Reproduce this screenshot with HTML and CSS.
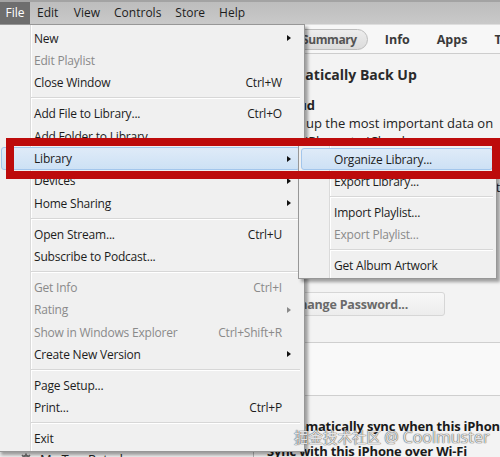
FILE: index.html
```html
<!DOCTYPE html>
<html lang="en">
<head>
<meta charset="utf-8">
<title>iTunes – File menu</title>
<link rel="stylesheet" href="styles.css">
</head>
<body>
<div class="screen">
  <nav class="menubar">
    <span class="mb-item is-open">File</span>
    <span class="mb-item">Edit</span>
    <span class="mb-item">View</span>
    <span class="mb-item">Controls</span>
    <span class="mb-item">Store</span>
    <span class="mb-item">Help</span>
  </nav>

  <div class="app">
    <aside class="sidebar">
      <ul class="source-list">
        <li class="src-head">LIBRARY</li>
        <li>Music</li>
        <li>Movies</li>
        <li>TV Shows</li>
        <li>Podcasts</li>
        <li>iTunes U</li>
        <li>Books</li>
        <li>Apps</li>
        <li>Tones</li>
        <li>Radio</li>
        <li class="src-head">STORE</li>
        <li>iTunes Store</li>
        <li>Purchased</li>
        <li class="src-head">DEVICES</li>
        <li>iPhone</li>
        <li class="src-head">GENIUS</li>
        <li>Genius</li>
        <li class="src-head">PLAYLISTS</li>
        <li>iTunes DJ</li>
        <li>90's Music</li>
        <li>Classical Music</li>
        <li class="src-playlist">
          <svg class="pl-icon" viewBox="0 0 12 12" width="12" height="12"><circle cx="6" cy="6" r="3.2" fill="none" stroke="#6b6b6b" stroke-width="2"/><path d="M6 0.5v2M6 9.5v2M0.5 6h2M9.5 6h2M2 2l1.4 1.4M8.6 8.6L10 10M2 10l1.4-1.4M8.6 3.4L10 2" stroke="#6b6b6b" stroke-width="1.6"/></svg>
          My Top Rated
        </li>
      </ul>
    </aside>

    <main class="content">
      <div class="tabs">
        <span class="tab is-active">Summary</span>
        <span class="tab">Info</span>
        <span class="tab">Apps</span>
        <span class="tab">Tones</span>
      </div>

      <section class="pane">
        <h2 class="pane-title">Automatically Back Up</h2>
        <h3 class="opt-title">iCloud</h3>
        <p class="opt-text">Back up the most important data on<br>your iPhone to iCloud.</p>
        <h3 class="opt-title">This computer</h3>
        <p class="opt-text">A full backup of your iPhone will be stored<br>on this computer.</p>
        <p class="check-line">Encrypt local backup</p>
        <p class="note">This will allow account passwords to be<br>backed up. However, keep it safe.</p>
        <button class="btn" type="button">Change Password...</button>
      </section>

      <section class="pane pane-alt">
        <p class="opt-text">Manually Back Up and Restore</p>
      </section>

      <section class="pane pane-options">
        <p class="opt-strong opt-first">Automatically sync when this iPhone is connected</p>
        <p class="opt-strong">Sync with this iPhone over Wi-Fi</p>
      </section>
    </main>
  </div>

  <div class="menu file-menu">
    <div class="mi"><span class="label">New</span><span class="arrow"></span></div>
    <div class="mi is-disabled"><span class="label">Edit Playlist</span></div>
    <div class="mi"><span class="label">Close Window</span><span class="key">Ctrl+W</span></div>
    <div class="sep"></div>
    <div class="mi"><span class="label">Add File to Library...</span><span class="key">Ctrl+O</span></div>
    <div class="mi"><span class="label">Add Folder to Library...</span></div>
    <div class="mi is-hot"><span class="label">Library</span><span class="arrow"></span></div>
    <div class="mi"><span class="label">Devices</span><span class="arrow"></span></div>
    <div class="mi"><span class="label">Home Sharing</span><span class="arrow"></span></div>
    <div class="sep"></div>
    <div class="mi"><span class="label">Open Stream...</span><span class="key">Ctrl+U</span></div>
    <div class="mi"><span class="label">Subscribe to Podcast...</span></div>
    <div class="sep"></div>
    <div class="mi is-disabled"><span class="label">Get Info</span><span class="key">Ctrl+I</span></div>
    <div class="mi is-disabled"><span class="label">Rating</span><span class="arrow"></span></div>
    <div class="mi is-disabled"><span class="label">Show in Windows Explorer</span><span class="key">Ctrl+Shift+R</span></div>
    <div class="mi"><span class="label">Create New Version</span><span class="arrow"></span></div>
    <div class="sep"></div>
    <div class="mi"><span class="label">Page Setup...</span></div>
    <div class="mi"><span class="label">Print...</span><span class="key">Ctrl+P</span></div>
    <div class="sep"></div>
    <div class="mi"><span class="label">Exit</span></div>
  </div>

  <div class="menu sub-menu">
    <div class="mi is-hot"><span class="label">Organize Library...</span></div>
    <div class="mi"><span class="label">Export Library...</span></div>
    <div class="sep"></div>
    <div class="mi"><span class="label">Import Playlist...</span></div>
    <div class="mi is-disabled"><span class="label">Export Playlist...</span></div>
    <div class="sep"></div>
    <div class="mi"><span class="label">Get Album Artwork</span></div>
  </div>

  <div class="callout"></div>
  <div class="watermark"><span class="wm-cjk">掘金技术社区</span> <span class="wm-latin">@ Coolmuster</span></div>
</div>
</body>
</html>
```

FILE: styles.css
```css
* { box-sizing: border-box; margin: 0; padding: 0; }

html, body { width: 500px; height: 457px; overflow: hidden; }

body {
  font-family: "Open Sans", "Noto Sans", sans-serif;
  font-size: 12px;
  color: #1c1c1c;
  background: #f0f0f0;
}

ul { list-style: none; }

.screen {
  position: relative;
  width: 500px;
  height: 457px;
  overflow: hidden;
  display: flex;
  flex-direction: column;
}

/* ---------- menu bar ---------- */
.menubar {
  flex: none;
  height: 24px;
  display: flex;
  background: linear-gradient(#bdbdbd, #c9c9c9);
  border-top: 2px solid #a3a3a3;
}

.mb-item {
  padding: 0 7px;
  line-height: 21px;
  color: #1c1c1c;
}

.mb-item.is-open {
  width: 30px;
  padding: 0;
  text-align: center;
  background: #6e6e6e;
  color: #fff;
}

.mb-item.is-open + .mb-item { padding-right: 8.5px; }

/* ---------- app body ---------- */
.app {
  flex: 1;
  display: flex;
  min-height: 0;
}

.sidebar {
  flex: none;
  width: 254px;
  background: #eeeeee;
  border-right: 1px solid #b3b3b3;
  padding-top: 5px;
}

.source-list li {
  height: 20px;
  line-height: 20px;
  padding-left: 40px;
  font-size: 13px;
  color: #222;
  display: flex;
  align-items: center;
  gap: 8px;
}

.source-list .src-head {
  padding-left: 10px;
  font-size: 11px;
  font-weight: 700;
  color: #666;
}

.source-list .src-playlist { padding-left: 20px; }

.content {
  flex: 1;
  min-width: 0;
  background: #f3f3f3;
  overflow: hidden;
}

.tabs {
  height: 30px;
  display: flex;
  align-items: center;
  padding-left: 36px;
  background: #f7f7f7;
  border-top: 1px solid #dedede;
  border-bottom: 1px solid #cdcdcd;
  font-weight: 700;
  font-size: 12.5px;
  color: #3a3a3a;
  white-space: nowrap;
}

.tab + .tab { margin-left: 27px; }
.tab.is-active + .tab { margin-left: 17px; }

.tab.is-active {
  padding: 1px 10px 1px 11px;
  border: 1px solid #bdbdbd;
  border-radius: 11px;
  background: linear-gradient(#ededed, #dcdcdc);
  color: #555;
  letter-spacing: -0.4px;
  font-size: 12px;
}

.pane {
  padding: 10px 0 0 20px;
  white-space: nowrap;
}

.pane-title {
  margin-left: -16px;
  font-size: 14px;
  font-weight: 700;
  line-height: 22px;
  color: #2a2a2a;
}

.opt-title {
  margin-top: 10px;
  font-size: 13px;
  font-weight: 700;
  line-height: 18px;
  color: #222;
}

.opt-text {
  font-size: 13px;
  line-height: 18px;
  color: #222;
}

.check-line {
  margin-top: 8px;
  font-size: 13px;
  line-height: 18px;
}

.note {
  margin-top: 7px;
  font-size: 12px;
  line-height: 16px;
  color: #333;
}

.btn {
  display: block;
  margin: 13px 0 0 16px;
  height: 24px;
  width: 155px;
  font: 700 12.5px "Open Sans", "Noto Sans", sans-serif;
  letter-spacing: -0.2px;
  color: #6a6a6a;
  background: linear-gradient(#f7f7f7, #ececec);
  border: 1px solid #d6d6d6;
  border-radius: 3px;
  text-align: right;
  padding-right: 36px;
}

.pane-alt {
  margin-top: 26px;
  height: 54px;
  background: #f9f9f9;
  border-top: 1px solid #cfcfcf;
  border-bottom: 1px solid #cfcfcf;
}

.pane-alt .opt-text { visibility: hidden; }

.pane-options { padding: 18px 0 0 13px; }

.opt-strong {
  font-size: 13px;
  font-weight: 700;
  line-height: 25px;
  letter-spacing: -0.2px;
  color: #1a1a1a;
}

.opt-strong.opt-first { padding-left: 8px; }

/* ---------- drop-down menus ---------- */
.menu {
  --gutter: 31px;
  position: absolute;
  background:
    linear-gradient(to right,
      transparent var(--gutter),
      #dadada var(--gutter), #dadada calc(var(--gutter) + 1px),
      #ffffff calc(var(--gutter) + 1px), #ffffff calc(var(--gutter) + 2px),
      transparent calc(var(--gutter) + 2px)),
    #f0f0f0;
  border: 1px solid #979797;
  padding: 2px 4px 1px 2px;
  box-shadow: 3px 3px 3px rgba(0, 0, 0, 0.35);
  white-space: nowrap;
}

.file-menu { left: -2px; top: 24px; width: 307px; }

.sub-menu { --gutter: 30px; left: 298px; top: 145px; width: 199px; padding-right: 3px; }

.mi {
  height: 22.4px;
  display: grid;
  grid-template-columns: 1fr auto 17px;
  align-items: center;
  padding-left: 32px;
  border: 1px solid transparent;
  border-radius: 3px;
  letter-spacing: -0.2px;
  color: #1c1c1c;
}

.mi .label { grid-column: 1; }
.mi .key { grid-column: 2; }

.mi .arrow {
  grid-column: 3;
  justify-self: start;
  margin-left: 5px;
  width: 0;
  height: 0;
  border-left: 4px solid #111;
  border-top: 3.5px solid transparent;
  border-bottom: 3.5px solid transparent;
}

.mi.is-disabled { color: #8a8a8a; }
.mi.is-disabled .arrow { border-left-color: #8a8a8a; }

.mi.is-hot {
  background: linear-gradient(#dfebf8, #cde1f5);
  border-color: #a3c6ec;
}

.sep {
  height: 8.4px;
  margin-left: 30px;
  background:
    linear-gradient(#d7d7d7, #d7d7d7) no-repeat 0 3px / 100% 1px,
    linear-gradient(#ffffff, #ffffff) no-repeat 0 4px / 100% 1px;
}

.sub-menu .sep { margin-left: 29px; }

/* ---------- annotation overlays ---------- */
.callout {
  position: absolute;
  left: 6px;
  top: 138px;
  width: 494px;
  height: 41px;
  border: 8px solid #bd0b0b;
}

.watermark {
  position: absolute;
  left: 294px;
  top: 426px;
  line-height: 22px;
  color: rgba(255, 255, 255, 0.85);
  text-shadow:
    0 0 1px rgba(70, 70, 70, 0.95),
    0 0 1px rgba(70, 70, 70, 0.95);
  white-space: nowrap;
}

.wm-cjk {
  font-family: "Noto Sans CJK SC", sans-serif;
  font-size: 14.5px;
}

.wm-latin {
  font-family: "Open Sans", sans-serif;
  font-size: 16px;
}
```
